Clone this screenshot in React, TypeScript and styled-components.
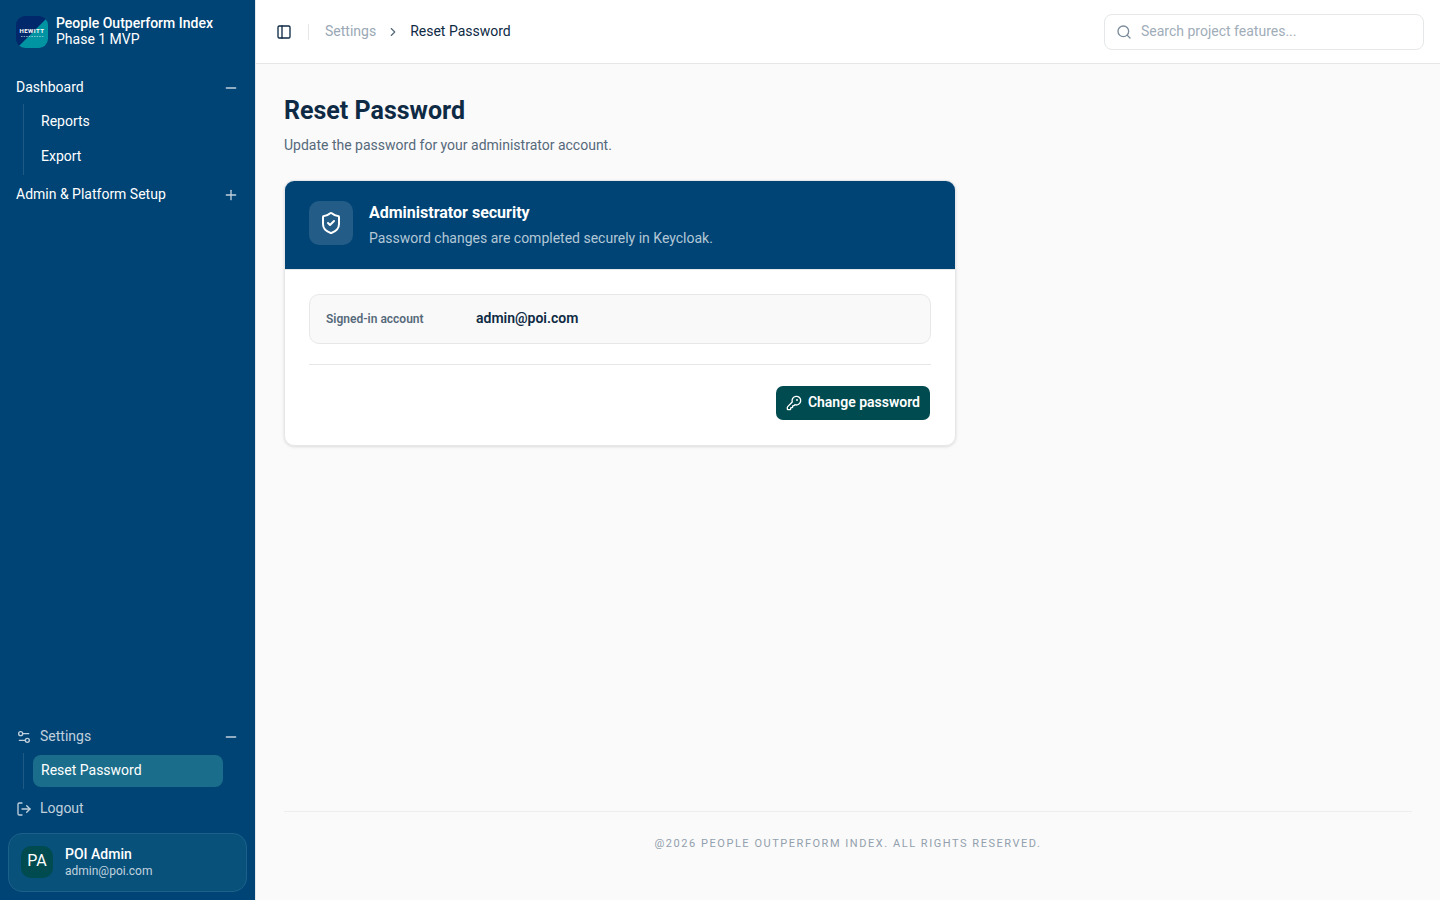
import React from "react";
import styled, { createGlobalStyle, css } from "styled-components";
import {
  ChevronRight,
  KeyRound,
  LogOut,
  Minus,
  PanelLeft,
  Plus,
  Search,
  Settings2,
  ShieldCheck,
} from "lucide-react";

const color = {
  navy: "#004475",
  ink: "#0e2a44",
  muted: "#56697a",
  faint: "#9aa8b5",
  line: "#e5e7e9",
  page: "#fafafa",
  teal: "#004b50",
};

const GlobalStyle = createGlobalStyle`
  *, *::before, *::after { box-sizing: border-box; }
  body {
    margin: 0;
    background: ${color.page};
    color: ${color.ink};
    font-family: Roboto, "Liberation Sans", sans-serif;
    font-size: 14px;
    line-height: 20px;
  }
  button, input { font: inherit; color: inherit; }
  a { color: inherit; text-decoration: none; }
  h1, h2, p, ul, ol, dl, dd { margin: 0; padding: 0; }
  ul, ol { list-style: none; }
  svg { flex-shrink: 0; }
`;

const Shell = styled.div`
  display: flex;
  min-height: 100vh;
`;

const Sidebar = styled.aside`
  position: sticky;
  top: 0;
  display: flex;
  flex-direction: column;
  flex: 0 0 256px;
  height: 100vh;
  padding: 8px;
  background: ${color.navy};
  border-right: 1px solid ${color.line};
  color: #fff;
`;

const Brand = styled.a`
  display: flex;
  align-items: center;
  gap: 8px;
  height: 48px;
  padding: 8px;
  margin-bottom: 16px;
  line-height: 16px;
`;

const BrandText = styled.span`
  padding-bottom: 2px;
`;

const BrandName = styled.span`
  display: block;
  font-weight: 500;
`;

const BrandPhase = styled.span`
  display: block;
`;

const Nav = styled.nav<{ $bottom?: boolean }>`
  display: flex;
  flex-direction: column;
  gap: 4px;
  ${(p) => p.$bottom && css`margin-top: auto;`}
`;

const rowStyle = css<{ $soft?: boolean }>`
  display: flex;
  align-items: center;
  gap: 8px;
  width: 100%;
  height: 32px;
  padding: 0 8px 2px;
  border: 0;
  border-radius: 8px;
  background: transparent;
  color: ${(p) => (p.$soft ? "#c0d0dd" : "#fff")};
  text-align: left;
  cursor: pointer;
`;

const NavButton = styled.button<{ $soft?: boolean }>`
  ${rowStyle}
`;

const NavAnchor = styled.a<{ $soft?: boolean }>`
  ${rowStyle}
`;

const NavLabel = styled.span`
  flex: 1;
`;

const NavIcon = styled.span`
  display: flex;
  padding-top: 2px;
  color: #c0d0dd;
`;

const SubNav = styled.ul`
  display: flex;
  flex-direction: column;
  gap: 3px;
  margin: 0 15px;
  padding: 2px 9px;
  border-left: 1px solid #1f5a87;
`;

const SubLink = styled.a<{ $active?: boolean }>`
  display: block;
  height: 32px;
  padding: 5px 8px;
  border-radius: 8px;
  background: ${(p) => (p.$active ? "#1a6e8b" : "transparent")};
`;

const UserCard = styled.div`
  display: flex;
  align-items: flex-start;
  gap: 12px;
  margin-top: 8px;
  padding: 12px;
  border: 1px solid #1d618a;
  border-radius: 14px;
  background: #08517b;
`;

const Avatar = styled.span`
  display: flex;
  align-items: center;
  justify-content: center;
  width: 32px;
  height: 32px;
  padding-bottom: 2px;
  border-radius: 10px;
  background: ${color.teal};
  font-size: 16px;
`;

const UserName = styled.p`
  font-weight: 500;
  line-height: 17px;
`;

const UserMail = styled.p`
  color: #c0d3df;
  font-size: 12px;
  line-height: 16px;
`;

const Content = styled.div`
  display: flex;
  flex: 1;
  flex-direction: column;
  min-width: 0;
`;

const TopBar = styled.header`
  display: flex;
  align-items: center;
  height: 64px;
  padding: 0 16px 0 14px;
  background: #fff;
  border-bottom: 1px solid ${color.line};
`;

const IconButton = styled.button`
  display: flex;
  align-items: center;
  justify-content: center;
  width: 28px;
  height: 28px;
  padding: 0;
  border: 0;
  background: transparent;
  cursor: pointer;
`;

const Divider = styled.span`
  width: 1px;
  height: 16px;
  margin: 0 16px 0 10px;
  background: ${color.line};
`;

const Crumbs = styled.ol`
  display: flex;
  align-items: center;
  gap: 10px;
  padding-bottom: 1px;
`;

const Crumb = styled.li<{ $current?: boolean }>`
  display: flex;
  color: ${(p) => (p.$current ? color.ink : color.faint)};
`;

const CrumbArrow = styled.li`
  display: flex;
  padding-top: 2px;
  color: ${color.muted};
`;

const SearchBox = styled.label`
  display: flex;
  align-items: center;
  gap: 9px;
  width: 320px;
  height: 36px;
  margin-left: auto;
  padding: 0 11px;
  border: 1px solid ${color.line};
  border-radius: 8px;
  color: #7b8b9a;
`;

const SearchInput = styled.input`
  flex: 1;
  min-width: 0;
  padding: 0 0 2px;
  border: 0;
  outline: 0;
  background: transparent;
  color: ${color.ink};
  &::placeholder { color: #9fadb9; opacity: 1; }
`;

const Main = styled.main`
  display: flex;
  flex: 1;
  flex-direction: column;
  padding: 28px 28px 24px;
`;

const Title = styled.h1`
  font-size: 25px;
  font-weight: 700;
  line-height: 38px;
`;

const Lead = styled.p`
  margin: 5px 0 25px;
  color: ${color.muted};
`;

const Card = styled.section`
  width: 100%;
  max-width: 672px;
  overflow: hidden;
  border: 1px solid ${color.line};
  border-radius: 10px;
  background: #fff;
  box-shadow: 0 1px 3px rgba(0, 0, 0, 0.12);
`;

const CardHead = styled.div`
  display: flex;
  gap: 16px;
  padding: 20px 24px 21px;
  border-bottom: 1px solid ${color.line};
  background: ${color.navy};
  background-clip: padding-box;
  color: #fff;
`;

const Badge = styled.span`
  display: flex;
  align-items: center;
  justify-content: center;
  width: 44px;
  height: 44px;
  border-radius: 10px;
  background: #235c86;
`;

const CardTitle = styled.h2`
  font-size: 16px;
  font-weight: 700;
  line-height: 23px;
`;

const CardText = styled.p`
  margin-top: 4px;
  color: #b3c7d6;
`;

const CardBody = styled.div`
  padding: 24px;
`;

const Account = styled.dl`
  display: grid;
  grid-template-columns: 134px 1fr;
  gap: 16px;
  padding: 13px 16px 14px;
  border: 1px solid ${color.line};
  border-radius: 10px;
  background: #f9f9f9;
`;

const AccountTerm = styled.dt`
  padding-top: 1px;
  color: ${color.muted};
  font-size: 12px;
  font-weight: 600;
`;

const AccountValue = styled.dd`
  font-weight: 600;
`;

const Actions = styled.div`
  display: flex;
  justify-content: flex-end;
  margin-top: 20px;
  padding-top: 20px;
  border-top: 1px solid ${color.line};
`;

const PrimaryButton = styled.button`
  display: flex;
  align-items: center;
  gap: 6px;
  height: 36px;
  padding: 0 10px;
  border: 1px solid transparent;
  border-radius: 8px;
  background: ${color.teal};
  background-clip: padding-box;
  color: #fff;
  font-weight: 600;
  cursor: pointer;
`;

const ButtonLabel = styled.span`
  padding-bottom: 2px;
`;

const Footer = styled.footer`
  margin-top: auto;
  padding: 24px 0;
  border-top: 1px solid #eceeef;
  color: #92a0ad;
  font-size: 11px;
  line-height: 16px;
  letter-spacing: 0.14em;
  text-align: center;
  text-transform: uppercase;
`;

const Logo = () => (
  <svg width="32" height="32" viewBox="0 0 32 32" role="img" aria-label="Hewitt Consulting">
    <defs>
      <clipPath id="logo-shape">
        <rect width="32" height="32" rx="9" />
      </clipPath>
    </defs>
    <g clipPath="url(#logo-shape)">
      <rect width="32" height="32" fill="#00286a" />
      <path d="M32 1 1 32h31z" fill="#0094a3" />
    </g>
    <text x="16" y="17" fill="#fff" fontSize="6" fontWeight="700" letterSpacing="0.5" textAnchor="middle">
      HEWITT
    </text>
    <path d="M5 20.5h23" stroke="#b9dbe4" strokeWidth="1" strokeDasharray="1.6 1" opacity="0.7" />
  </svg>
);

export default function App() {
  return (
    <Shell>
      <GlobalStyle />
      <Sidebar>
        <Brand href="#">
          <Logo />
          <BrandText>
            <BrandName>People Outperform Index</BrandName>
            <BrandPhase>Phase 1 MVP</BrandPhase>
          </BrandText>
        </Brand>
        <Nav aria-label="Main">
          <div>
            <NavButton aria-expanded="true">
              <NavLabel>Dashboard</NavLabel>
              <NavIcon><Minus size={16} /></NavIcon>
            </NavButton>
            <SubNav>
              <li><SubLink href="#reports">Reports</SubLink></li>
              <li><SubLink href="#export">Export</SubLink></li>
            </SubNav>
          </div>
          <NavButton aria-expanded="false">
            <NavLabel>Admin &amp; Platform Setup</NavLabel>
            <NavIcon><Plus size={16} /></NavIcon>
          </NavButton>
        </Nav>
        <Nav $bottom aria-label="Account">
          <div>
            <NavButton $soft aria-expanded="true">
              <NavIcon><Settings2 size={16} /></NavIcon>
              <NavLabel>Settings</NavLabel>
              <NavIcon><Minus size={16} /></NavIcon>
            </NavButton>
            <SubNav>
              <li><SubLink $active href="#reset" aria-current="page">Reset Password</SubLink></li>
            </SubNav>
          </div>
          <NavAnchor $soft href="#logout">
            <NavIcon><LogOut size={16} /></NavIcon>
            <NavLabel>Logout</NavLabel>
          </NavAnchor>
        </Nav>
        <UserCard>
          <Avatar>PA</Avatar>
          <div>
            <UserName>POI Admin</UserName>
            <UserMail>admin@poi.com</UserMail>
          </div>
        </UserCard>
      </Sidebar>
      <Content>
        <TopBar>
          <IconButton aria-label="Toggle sidebar"><PanelLeft size={16} /></IconButton>
          <Divider />
          <nav aria-label="Breadcrumb">
            <Crumbs>
              <Crumb><a href="#settings">Settings</a></Crumb>
              <CrumbArrow aria-hidden="true"><ChevronRight size={14} /></CrumbArrow>
              <Crumb $current aria-current="page">Reset Password</Crumb>
            </Crumbs>
          </nav>
          <SearchBox>
            <Search size={16} />
            <SearchInput type="search" aria-label="Search project features" placeholder="Search project features..." />
          </SearchBox>
        </TopBar>
        <Main>
          <Title>Reset Password</Title>
          <Lead>Update the password for your administrator account.</Lead>
          <Card>
            <CardHead>
              <Badge><ShieldCheck size={24} /></Badge>
              <div>
                <CardTitle>Administrator security</CardTitle>
                <CardText>Password changes are completed securely in Keycloak.</CardText>
              </div>
            </CardHead>
            <CardBody>
              <Account>
                <AccountTerm>Signed-in account</AccountTerm>
                <AccountValue>admin@poi.com</AccountValue>
              </Account>
              <Actions>
                <PrimaryButton>
                  <KeyRound size={16} />
                  <ButtonLabel>Change password</ButtonLabel>
                </PrimaryButton>
              </Actions>
            </CardBody>
          </Card>
          <Footer>@2026 People Outperform Index. All rights reserved.</Footer>
        </Main>
      </Content>
    </Shell>
  );
}
